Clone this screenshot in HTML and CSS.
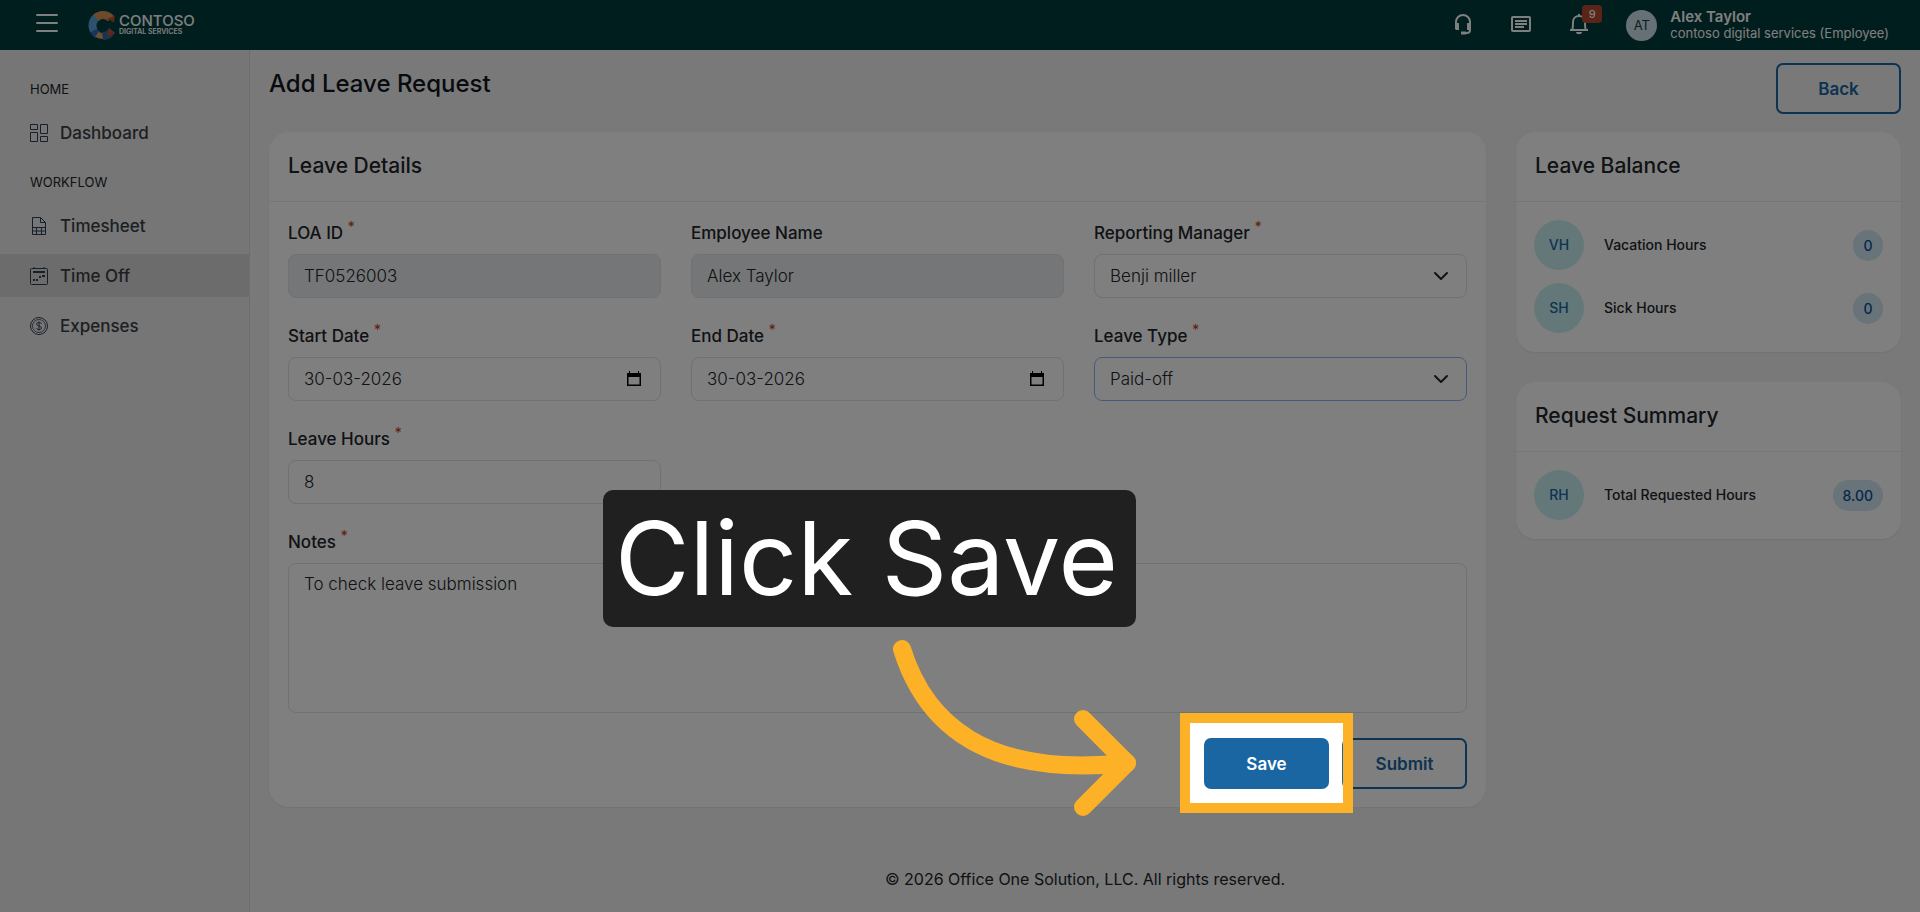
FILE: index.html
```html
<!DOCTYPE html>
<html lang="en">
<head>
  <meta charset="UTF-8">
  <meta name="viewport" content="width=device-width, initial-scale=1.0">
  <title>Add Leave Request</title>
  <link rel="stylesheet" href="styles.css">
</head>
<body>
  <header class="topbar">
    <button class="menu-btn" type="button" aria-label="Toggle menu">
      <svg width="22" height="20" viewBox="0 0 22 20" stroke="#fff" stroke-width="2" stroke-linecap="round"><path d="M1 2h20M1 10h20M1 18h20"/></svg>
    </button>
    <a class="logo" href="#" aria-label="Contoso Digital Services">
      <svg width="28" height="31" viewBox="0 0 28 31" fill="none" stroke-width="8">
        <path d="M9.700 6.400A10.500 10.500 0 0 0 5.900 20.700" stroke="#5aa2dc"/>
        <path d="M5.900 20.700A10.500 10.500 0 0 0 10 24.700" stroke="#2f6fb4"/>
        <path d="M9 24.200A10.500 10.500 0 0 0 16 26" stroke="#d8a468" stroke-width="6"/>
        <path d="M8 7.700A10.500 10.500 0 0 1 23 8.700" stroke="#d99458"/>
        <path d="M18 9.500l9-4-1 7c-3-2-5-3-8-3z" fill="#b9502e"/>
        <path d="M14 22c3 0 5-1 7-4l6 5c-3 5-7 7-12 7z" fill="#3a62a0"/>
        <path d="M21 18l6 5-8 4z" fill="#c0512f"/>
      </svg>
      <span class="logo-text">
        <span class="logo-name">CONTOSO</span>
        <span class="logo-sub">DIGITAL SERVICES</span>
      </span>
    </a>
    <div class="topbar-right">
      <button class="icon-btn" type="button" aria-label="Support">
        <svg width="20" height="22" viewBox="0 0 20 22" fill="none" stroke="#fff" stroke-width="2"><path d="M3 12V9a7 7 0 0 1 14 0v8c0 2-1 3-3 3h-4"/><path d="M2 10h4v7H3l-1-1zM14 10h4v6l-1 1h-3z" fill="#fff" stroke="none"/><path d="M8 20h5" stroke-width="3"/></svg>
      </button>
      <button class="icon-btn" type="button" aria-label="News">
        <svg width="22" height="18" viewBox="0 0 22 18" fill="none" stroke="#fff" stroke-width="2"><rect x="2" y="2" width="18" height="14" rx="1"/><path d="M5 6h12M5 9h12M5 12h9"/></svg>
      </button>
      <button class="icon-btn" type="button" aria-label="Notifications">
        <svg width="20" height="22" viewBox="0 0 20 22" fill="none" stroke="#fff" stroke-width="2"><path d="M1 17h18"/><path d="M3 17c1-1 1-3 1-8 0-4 3-6 6-6s6 2 6 6c0 5 0 7 1 8"/><path d="M10 1v2"/><path d="M7 19h6c0 3-6 3-6 0z" fill="#fff" stroke="none"/></svg>
        <span class="count">9</span>
      </button>
      <div class="user">
        <span class="user-avatar">AT</span>
        <div class="user-info">
          <strong>Alex Taylor</strong>
          <span>contoso digital services (Employee)</span>
        </div>
      </div>
    </div>
  </header>

  <div class="layout">
    <nav class="sidebar">
      <h2 class="nav-title">HOME</h2>
      <ul class="nav-list">
        <li><a href="#">
          <svg width="20" height="20" viewBox="0 0 20 20" class="nav-icon"><path d="M1.500 1.500h7v5h-7zM11.500 1.500h7v9h-7zM1.500 9.500h7v9h-7zM11.500 13.500h7v5h-7z"/></svg>
          Dashboard
        </a></li>
      </ul>
      <h2 class="nav-title">WORKFLOW</h2>
      <ul class="nav-list">
        <li><a href="#">
          <svg width="20" height="20" viewBox="0 0 20 20" class="nav-icon"><path d="M3.500 1.500h8l5 5v12h-13zM11.500 1.500v5h5M3.500 11.500h13M3.500 15h13M7.500 11.500v7M12.500 11.500v7"/></svg>
          Timesheet
        </a></li>
        <li><a href="#" class="active">
          <svg width="20" height="20" viewBox="0 0 20 20" class="nav-icon"><rect x="1.500" y="2.500" width="17" height="16" rx="1"/><path d="M5 1v2M15 1v2"/><path d="M4 6h12" stroke-width="2"/><path d="M13 10h3M4 14h2M7 14h2M10 11h2" stroke-width="2"/></svg>
          Time Off
        </a></li>
        <li><a href="#">
          <svg width="20" height="20" viewBox="0 0 20 20" class="nav-icon"><circle cx="10" cy="10" r="8.500"/><circle cx="10" cy="10" r="6.500" stroke-width="0.800"/><path d="M12.500 8c0-2-5-2-5 0s5 2 5 4-5 2-5 0M10 5.500v9"/></svg>
          Expenses
        </a></li>
      </ul>
    </nav>

    <main class="main">
      <div class="page-head">
        <h1>Add Leave Request</h1>
        <button class="btn btn-outline" type="button">Back</button>
      </div>

      <div class="columns">
        <form class="card">
          <h2 class="card-title">Leave Details</h2>
          <div class="card-body">
            <div class="fields">
              <div class="field">
                <label for="loa">LOA ID <sup>*</sup></label>
                <input id="loa" type="text" value="TF0526003" disabled>
              </div>
              <div class="field">
                <label for="employee">Employee Name</label>
                <input id="employee" type="text" value="Alex Taylor" disabled>
              </div>
              <div class="field">
                <label for="manager">Reporting Manager <sup>*</sup></label>
                <div class="control">
                  <select id="manager"><option>Benji miller</option></select>
                  <svg class="control-icon" width="16" height="16" viewBox="0 0 16 16" fill="none" stroke="#212529" stroke-width="2" stroke-linecap="round" stroke-linejoin="round"><path d="M2 5l6 6 6-6"/></svg>
                </div>
              </div>
              <div class="field">
                <label for="start">Start Date <sup>*</sup></label>
                <div class="control">
                  <input id="start" type="text" value="30-03-2026">
                  <svg class="control-icon calendar" width="14" height="16" viewBox="0 0 14 16"><path d="M0 2h2V0h1v2h8V0h1v2h2v13H0zm1.500 4v7.500h11V6z" fill="#000" fill-rule="evenodd"/></svg>
                </div>
              </div>
              <div class="field">
                <label for="end">End Date <sup>*</sup></label>
                <div class="control">
                  <input id="end" type="text" value="30-03-2026">
                  <svg class="control-icon calendar" width="14" height="16" viewBox="0 0 14 16"><path d="M0 2h2V0h1v2h8V0h1v2h2v13H0zm1.500 4v7.500h11V6z" fill="#000" fill-rule="evenodd"/></svg>
                </div>
              </div>
              <div class="field">
                <label for="type">Leave Type <sup>*</sup></label>
                <div class="control">
                  <select id="type" class="focused"><option>Paid-off</option></select>
                  <svg class="control-icon" width="16" height="16" viewBox="0 0 16 16" fill="none" stroke="#212529" stroke-width="2" stroke-linecap="round" stroke-linejoin="round"><path d="M2 5l6 6 6-6"/></svg>
                </div>
              </div>
              <div class="field">
                <label for="hours">Leave Hours <sup>*</sup></label>
                <input id="hours" type="text" value="8">
              </div>
              <div class="field field-wide">
                <label for="notes">Notes <sup>*</sup></label>
                <textarea id="notes">To check leave submission</textarea>
              </div>
            </div>

            <div class="actions">
              <div class="tour-target">
                <button class="btn btn-primary" type="button">Save</button>
                <!-- guided step: dims the page around the button -->
                <div class="spotlight"></div>
                <div class="callout">Click Save</div>
                <svg class="arrow" width="250" height="180" viewBox="0 0 250 180" fill="none" stroke="#fdb126" stroke-width="18" stroke-linecap="round" stroke-linejoin="round">
                  <path d="M12 11C35 85 95 140 237 125"/>
                  <path d="M193 81l44 44-44 44"/>
                </svg>
              </div>
              <button class="btn btn-outline" type="button">Submit</button>
            </div>
          </div>
        </form>

        <aside class="side">
          <section class="card">
            <h2 class="card-title">Leave Balance</h2>
            <ul class="card-body balance">
              <li><span class="circle">VH</span><span class="balance-name">Vacation Hours</span><span class="pill">0</span></li>
              <li><span class="circle">SH</span><span class="balance-name">Sick Hours</span><span class="pill">0</span></li>
            </ul>
          </section>
          <section class="card">
            <h2 class="card-title">Request Summary</h2>
            <ul class="card-body balance">
              <li><span class="circle">RH</span><span class="balance-name">Total Requested Hours</span><span class="pill">8.00</span></li>
            </ul>
          </section>
        </aside>
      </div>

      <footer class="footer">© 2026 Office One Solution, LLC. All rights reserved.</footer>
    </main>
  </div>
</body>
</html>
```
FILE: styles.css
```css
* {
  box-sizing: border-box;
}

body {
  margin: 0;
  min-height: 100vh;
  display: flex;
  flex-direction: column;
  background: #f2f2f2;
  color: #212529;
  font-family: Inter, "Liberation Sans", sans-serif;
  font-size: 17px;
  line-height: 24px;
}

h1, h2, ul {
  margin: 0;
  padding: 0;
  font-weight: 500;
}

ul {
  list-style: none;
}

button, input, select, textarea {
  font: inherit;
  color: inherit;
}

/* top bar */
.topbar {
  height: 50px;
  padding: 0 31px 0 36px;
  display: flex;
  align-items: center;
  background: #033c3c;
  color: #fff;
}

.menu-btn, .icon-btn {
  padding: 0;
  border: 0;
  background: none;
  display: flex;
  position: relative;
}

.menu-btn {
  margin-bottom: 4px;
}

.logo {
  margin-left: 30px;
  display: flex;
  align-items: center;
  gap: 3px;
  color: #fff;
  text-decoration: none;
}

.logo-text {
  display: flex;
  flex-direction: column;
}

.logo-name {
  font-size: 15px;
  line-height: 14px;
  font-weight: 500;
}

.logo-sub {
  font-size: 7px;
  line-height: 8px;
  font-weight: 600;
}

.topbar-right {
  margin-left: auto;
  display: flex;
  align-items: center;
  gap: 37px;
}

.icon-btn {
  margin-bottom: 2px;
}

.count {
  position: absolute;
  left: 13px;
  top: -8px;
  width: 20px;
  height: 18px;
  border-radius: 4px;
  background: #b54a2c;
  color: #fff;
  font-size: 11px;
  line-height: 18px;
  font-weight: 500;
}

.user {
  display: flex;
  align-items: center;
  gap: 13px;
}

.user-avatar {
  width: 31px;
  height: 31px;
  border-radius: 50%;
  background: #cfe3ea;
  color: #14384a;
  font-size: 13px;
  line-height: 31px;
  text-align: center;
}

.user-info {
  display: flex;
  flex-direction: column;
  font-size: 13px;
  line-height: 16px;
}

.user-info strong {
  font-size: 15px;
  font-weight: 600;
}

/* sidebar */
.layout {
  flex: 1;
  display: flex;
}

.sidebar {
  width: 250px;
  flex-shrink: 0;
  padding-top: 29px;
  border-right: 1px solid #dcdcdc;
  background: #ececec;
}

.nav-title {
  margin-bottom: 12px;
  padding-left: 30px;
  font-size: 13px;
  line-height: 20px;
  font-weight: 400;
}

.nav-list {
  margin-bottom: 18px;
  display: flex;
  flex-direction: column;
  gap: 7px;
}

.nav-list a {
  height: 43px;
  padding-left: 29px;
  display: flex;
  align-items: center;
  gap: 11px;
  color: #3a3f44;
  text-decoration: none;
}

.nav-list .active {
  background: #d9d9d9;
}

.nav-icon {
  fill: none;
  stroke: #2f4050;
}

/* page */
.main {
  flex: 1;
  min-width: 0;
  padding: 13px 19px 0;
}

.page-head {
  display: flex;
  justify-content: space-between;
  margin-bottom: 18px;
}

.page-head h1 {
  padding-top: 6px;
  font-size: 24px;
  line-height: 30px;
  color: #10141c;
}

.btn {
  width: 125px;
  height: 51px;
  border: 2px solid #1966a3;
  border-radius: 7px;
  font-weight: 600;
}

.btn-outline {
  background: transparent;
  color: #1966a3;
}

.btn-primary {
  background: #1966a3;
  color: #fff;
}

.columns {
  display: grid;
  grid-template-columns: 1fr 385px;
  gap: 30px;
  align-items: start;
}

.side {
  display: grid;
  gap: 30px;
}

.card {
  border-radius: 20px;
  background: #fff;
  box-shadow: 0 1px 2px #0000000f;
}

.card-title {
  padding: 19px 19px 20px;
  border-bottom: 1px solid #ececec;
  font-size: 21px;
  line-height: 30px;
}

.card-body {
  padding: 19px 19px 18px;
}

.fields {
  display: grid;
  grid-template-columns: repeat(3, 1fr);
  gap: 26px 30px;
}

.field {
  display: flex;
  flex-direction: column;
  gap: 9px;
}

.field-wide {
  grid-column: 1 / -1;
}

.field label {
  font-weight: 500;
}

.field sup {
  color: #c0441c;
  line-height: 0;
}

.control {
  position: relative;
}

.control-icon {
  position: absolute;
  right: 18px;
  top: 14px;
  pointer-events: none;
}

.calendar {
  right: 20px;
}

.field input, .field select, .field textarea {
  display: block;
  width: 100%;
  height: 44px;
  padding: 0 15px;
  border: 1px solid #dee2e6;
  border-radius: 8px;
  background: #fff;
  font-weight: 300;
  outline: none;
  appearance: none;
}

.field input:disabled {
  background: #e9ecef;
}

.field .focused {
  border-color: #86b7fe;
}

.field textarea {
  height: 150px;
  padding: 8px 15px;
  resize: none;
}

.actions {
  margin-top: 25px;
  display: flex;
  justify-content: flex-end;
  gap: 13px;
}

/* guided step */
.tour-target {
  position: relative;
}

.tour-target .btn {
  display: block;
}

.spotlight {
  position: absolute;
  z-index: 10;
  inset: -25px -24px -24px;
  border: 10px solid #fdb126;
  box-shadow: 0 0 0 9999px #00000080;
  pointer-events: none;
}

.callout {
  position: absolute;
  z-index: 11;
  right: 193px;
  bottom: 162px;
  width: 533px;
  height: 137px;
  padding-left: 12px;
  border-radius: 10px;
  background: #202020;
  color: #fff;
  font-size: 102px;
  line-height: 137px;
  white-space: nowrap;
}

.arrow {
  position: absolute;
  z-index: 11;
  left: -314px;
  top: -100px;
  pointer-events: none;
}

/* side cards */
.balance {
  padding: 18px 18px 19px;
  display: grid;
  gap: 13px;
}

.balance li {
  display: flex;
  align-items: center;
  gap: 20px;
  font-size: 14px;
  font-weight: 500;
}

.circle {
  width: 50px;
  height: 50px;
  border-radius: 50%;
  background: #c8f0f5;
  color: #1966a3;
  line-height: 50px;
  text-align: center;
}

.balance-name {
  flex: 1;
}

.pill {
  min-width: 30px;
  padding: 0 10px;
  border-radius: 16px;
  background: #d3e7f5;
  color: #0b4f94;
  font-size: 14px;
  line-height: 31px;
  text-align: center;
}

.footer {
  margin-top: 60px;
  text-align: center;
  font-size: 16px;
}
```
